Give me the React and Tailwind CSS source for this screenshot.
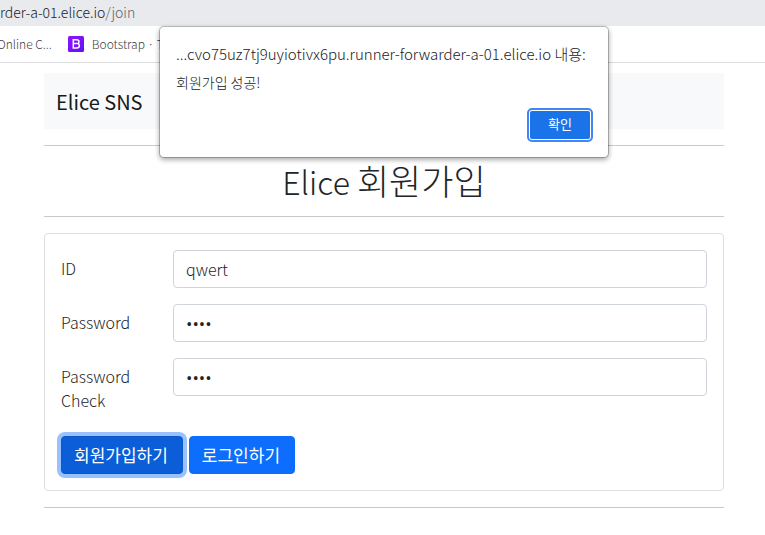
import { useState } from 'react'

const FIELDS = [
  { id: 'userId', label: 'ID', type: 'text', value: 'qwert' },
  { id: 'password', label: 'Password', type: 'password', value: '1234' },
  { id: 'passwordCheck', label: 'Password Check', type: 'password', value: '1234' },
]

const INPUT_FONT = {
  text: 'text-base font-light',
  password: "font-['Open_Sans',sans-serif] text-[17px]",
}

function BrowserBar() {
  return (
    <header className="text-[#3c4043]">
      <div className="flex h-[26px] items-center overflow-hidden whitespace-nowrap bg-[#e8eaed] pb-0.5 text-sm leading-5 font-light">
        <span className="text-[#202124]">rder-a-01.elice.io</span>
        <span className="text-[#5f6368]">/join</span>
      </div>
      <nav className="flex h-[37px] items-center gap-4 overflow-hidden whitespace-nowrap border-b border-[#dadce0] text-xs font-light">
        <a href="#online" className="-ml-[3px]">Online C...</a>
        <a href="#bootstrap" className="flex items-center gap-2">
          <BootstrapIcon />
          Bootstrap · The
        </a>
      </nav>
    </header>
  )
}

function BootstrapIcon() {
  return (
    <svg viewBox="0 0 16 16" className="size-4 shrink-0" aria-hidden="true">
      <defs>
        <linearGradient id="bs" x1="0" y1="0" x2="1" y2="1">
          <stop offset="0" stopColor="#8a14ff" />
          <stop offset="1" stopColor="#6610f2" />
        </linearGradient>
      </defs>
      <rect width="16" height="16" rx="1.5" fill="url(#bs)" />
      <path
        d="M5.3 3.7h3.3c1.5 0 2.4.8 2.4 2 0 .9-.6 1.5-1.3 1.8 1 .2 1.7.9 1.7 2.1 0 1.6-1.1 2.5-2.8 2.5H5.3zM5.8 7.6h3"
        fill="none"
        stroke="#fff"
        strokeWidth="1.5"
      />
    </svg>
  )
}

function AlertDialog({ onClose }) {
  return (
    <div className="absolute inset-x-0 top-[27px] flex justify-center pl-[3px]">
      <div
        role="alertdialog"
        aria-labelledby="alert-title"
        className="w-[448px] rounded-[4px] bg-white px-4 pt-[15px] pb-4 text-[#202124] shadow-[0_0_0_1px_rgba(0,0,0,0.22),0_2px_5px_1px_rgba(0,0,0,0.32)]"
      >
        <h2 id="alert-title" className="whitespace-nowrap text-[15px] leading-6 font-light">
          ...cvo75uz7tj9uyiotivx6pu.runner-forwarder-a-01.elice.io 내용:
        </h2>
        <p className="mt-1 text-sm leading-6 font-light">회원가입 성공!</p>
        <div className="mt-4 flex justify-end pr-px pb-px">
          <button
            type="button"
            onClick={onClose}
            className="h-[30px] w-[62px] rounded-[3px] border border-white bg-[#1a73e8] pb-0.5 text-[13px] text-white outline-2 outline-[#4285f4]"
          >
            확인
          </button>
        </div>
      </div>
    </div>
  )
}

export default function App() {
  const [open, setOpen] = useState(true)

  return (
    <div className="relative bg-white font-['Noto_Sans_CJK_KR',sans-serif] text-[#212529]">
      <BrowserBar />

      <main className="pt-[10px] pr-[41px] pb-7 pl-11">
        <nav className="flex h-14 items-center bg-[#f8f9fa] px-3 pt-0.5">
          <a href="#home" className="text-xl text-[#18191a]">Elice SNS</a>
        </nav>

        <hr className="my-4 border-[#c8c9ca]" />
        <h1 className="h-[38px] text-center text-[32px] leading-9 font-light">
          Elice <span className="text-[35px] leading-none">회원가입</span>
        </h1>
        <hr className="my-4 border-[#c8c9ca]" />

        <form className="rounded-[4px] border border-[#dfdfdf] p-4" onSubmit={(e) => e.preventDefault()}>
          {FIELDS.map((f) => (
            <div key={f.id} className="mb-4 flex items-start">
              <label htmlFor={f.id} className="w-28 shrink-0 pt-1.5 pb-2 pr-6 text-base leading-6 font-light">
                {f.label}
              </label>
              <input
                id={f.id}
                type={f.type}
                defaultValue={f.value}
                className={`h-[38px] min-w-0 flex-1 rounded-[4px] border border-[#ced4da] bg-white px-3 ${INPUT_FONT[f.type]}`}
              />
            </div>
          ))}
          <div className="flex gap-1.5">
            <button
              type="submit"
              className="h-[38px] rounded-[4px] border border-[#0a58ca] bg-[#0b5ed7] pr-[14px] pl-3 text-[17px] leading-6 text-white ring-4 ring-[#98c1fe]"
            >
              회원가입하기
            </button>
            <button
              type="button"
              className="h-[38px] rounded-[4px] border border-[#0d6efd] bg-[#0d6efd] pr-[14px] pl-3 text-[17px] leading-6 text-white"
            >
              로그인하기
            </button>
          </div>
        </form>
        <hr className="mt-4 border-[#c8c9ca]" />
      </main>

      {open && <AlertDialog onClose={() => setOpen(false)} />}
    </div>
  )
}
